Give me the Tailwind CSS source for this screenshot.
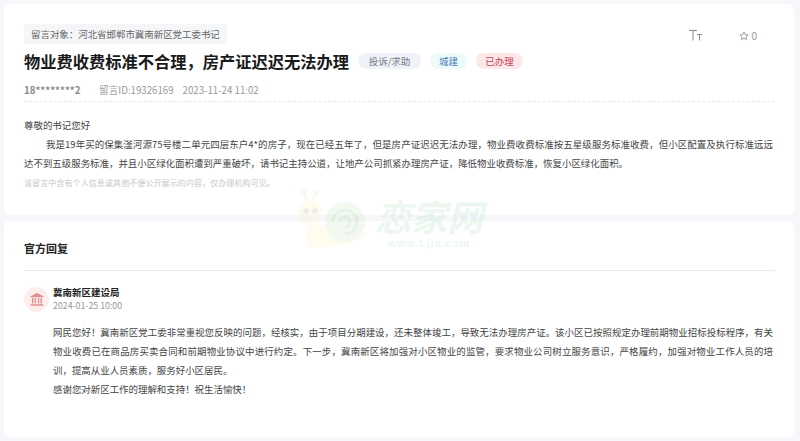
<!DOCTYPE html>
<html lang="zh-CN">
<head>
<meta charset="utf-8">
<title>留言详情</title>
<script src="https://cdn.jsdelivr.net/npm/@tailwindcss/browser@4"></script>
</head>
<body class="relative w-[800px] h-[441px] overflow-hidden bg-[#f5f7fa] font-['Noto_Sans_CJK_SC','Noto_Sans',sans-serif] text-[#333]">
  <main class="flex flex-col gap-[6px] pt-[4px] pl-[4px] pr-[6px]">

    <!-- message card -->
    <section class="h-[211px] rounded-[6px] bg-white pl-[20px] pr-[19px] pt-[20px]">
      <div class="flex items-start justify-between">
        <div class="h-[20px] rounded-[2px] bg-[#f5f6f8] px-[7px] text-[9.45px] leading-[20px] text-[#666]">留言对象：河北省邯郸市冀南新区党工委书记</div>
        <div class="flex items-center pr-[18px] pt-[6px] text-[#999]">
          <svg class="w-[13px] h-[11px]" viewBox="0 0 13 11" fill="none" stroke="#8c8c8c" stroke-width="1">
            <path d="M0 .5H8M4 .5V10.5M8 4.5H13M10.5 4.5V10.5"/>
          </svg>
          <svg class="ml-[37px] w-[10px] h-[10px]" viewBox="0 0 24 24" fill="none" stroke="#8c8c8c" stroke-width="2" stroke-linejoin="round">
            <path d="M12 2.5l2.9 6.2 6.8.8-5 4.6 1.3 6.7-6-3.3-6 3.3 1.3-6.7-5-4.6 6.8-.8z"/>
          </svg>
          <span class="ml-[2px] text-[10px] leading-none">0</span>
        </div>
      </div>

      <div class="mt-[5px] flex items-center">
        <h1 class="text-[16.25px] leading-[24px] font-bold text-[#1a1a1a]">物业费收费标准不合理，房产证迟迟无法办理</h1>
        <span class="ml-[9px] h-[16px] w-[63px] rounded-full bg-[#eff2f7] text-center text-[9.5px] leading-[16px] text-[#778]">投诉/求助</span>
        <span class="ml-[9px] h-[16px] w-[37px] rounded-full bg-[#ecfafa] text-center text-[9.5px] leading-[16px] text-[#4a7fb5]">城建</span>
        <span class="ml-[9px] h-[16px] w-[47px] rounded-full bg-[#fde8e9] text-center text-[9.5px] leading-[16px] text-[#c8434f]">已办理</span>
      </div>

      <div class="mt-[9px] flex items-center pb-[3px] border-b border-dashed border-[#e8e8e8] text-[9.7px] leading-[16px] text-[#999]">
        <span class="w-[75px] font-semibold text-[#888]">18********2</span>
        <span>留言ID:19326169</span>
        <span class="ml-[9px]">2023-11-24 11:02</span>
      </div>

      <div class="mt-[14px] pr-[2px] text-[9.45px] leading-[19px] text-[#444]">
        <p>尊敬的书记您好</p>
        <p class="pl-[22px] [text-align-last:justify]">我是19年买的保集滏河源75号楼二单元四层东户4*的房子，现在已经五年了，但是房产证迟迟无法办理，物业费收费标准按五星级服务标准收费，但小区配置及执行标准远远</p>
        <p>达不到五级服务标准，并且小区绿化面积遭到严重破坏，请书记主持公道，让地产公司抓紧办理房产证，降低物业收费标准，恢复小区绿化面积。</p>
      </div>
      <p class="text-[8.1px] leading-[19px] text-[#c8c8c8]">该留言中含有个人信息或其他不便公开展示的内容，仅办理机构可见。</p>
    </section>

    <!-- official reply card -->
    <section class="h-[216px] rounded-[6px] bg-white pl-[20px] pr-[19px] pt-[17px]">
      <h2 class="border-b border-[#ebebeb] pb-[12px] text-[11px] leading-[20px] font-bold text-[#222]">官方回复</h2>
      <div class="mt-[14px] flex items-center gap-[4px]">
        <div class="flex h-[25px] w-[25px] items-center justify-center rounded-full bg-[#fdeeee]">
          <svg class="w-[14px] h-[13px]" viewBox="0 0 14 13" fill="#e38f8c">
            <path d="M7 0L13.5 3.2V4.2H0.5V3.2Z"/>
            <path d="M2 5h1.5v5.5H2zM4.8 5h1.2v5.5H4.8zM8 5h1.2v5.5H8zM10.5 5H12v5.5h-1.5zM1 11h12v.8H1zM.3 12.2h13.4v.8H.3z"/>
          </svg>
        </div>
        <div>
          <div class="text-[9.5px] leading-[14px] font-bold text-[#222]">冀南新区建设局</div>
          <div class="text-[8.8px] leading-[14px] text-[#999]">2024-01-25 10:00</div>
        </div>
      </div>
      <div class="mt-[10px] pl-[29px] pr-[2px] text-[9.45px] leading-[19px] text-[#444]">
        <p class="[text-align-last:justify]">网民您好！冀南新区党工委非常重视您反映的问题，经核实，由于项目分期建设，还未整体竣工，导致无法办理房产证。该小区已按照规定办理前期物业招标投标程序，有关</p>
        <p class="[text-align-last:justify]">物业收费已在商品房买卖合同和前期物业协议中进行约定。下一步，冀南新区将加强对小区物业的监管，要求物业公司树立服务意识，严格履约，加强对物业工作人员的培</p>
        <p>训，提高从业人员素质，服务好小区居民。</p>
        <p>感谢您对新区工作的理解和支持！祝生活愉快！</p>
      </div>
    </section>
  </main>

  <!-- site watermark over the page -->
  <div class="pointer-events-none absolute left-[296px] top-[188px] flex items-start opacity-20">
    <svg class="w-[76px] h-[62px]" viewBox="0 0 76 62">
      <path d="M12 59C9 50 10 42 15 34L32 42C44 48 58 48 72 44C62 56 40 60 12 59Z" fill="#f8f2b2"/>
      <circle cx="49" cy="34" r="20" fill="#c6e4b9"/>
      <path d="M37 34a12 12 0 1 1 12 12M44 34a5 5 0 1 1 5 5" fill="none" stroke="#87c691" stroke-width="3"/>
      <ellipse cx="14" cy="25" rx="11" ry="13" fill="#f8f2b2"/>
      <circle cx="10" cy="23" r="3" fill="#a5a593"/><circle cx="19" cy="23" r="3" fill="#a5a593"/>
      <path d="M11 12L8 4M17 12L20 5" stroke="#e8dc8c" stroke-width="1.5"/>
      <circle cx="8" cy="4" r="2.6" fill="#e8dc8c"/><circle cx="20" cy="5" r="2.6" fill="#e8dc8c"/>
    </svg>
    <div class="ml-[3px] mt-[8px] flex flex-col items-center">
      <span class="text-[36px] leading-[38px] font-bold italic text-[#a5dab9]">恋家网</span>
      <span class="mt-[4px] font-['Liberation_Sans'] text-[11px] leading-[11px] font-bold tracking-[0.8px] text-[#a5dab9]">www.Ljia.com</span>
    </div>
  </div>
</body>
</html>
